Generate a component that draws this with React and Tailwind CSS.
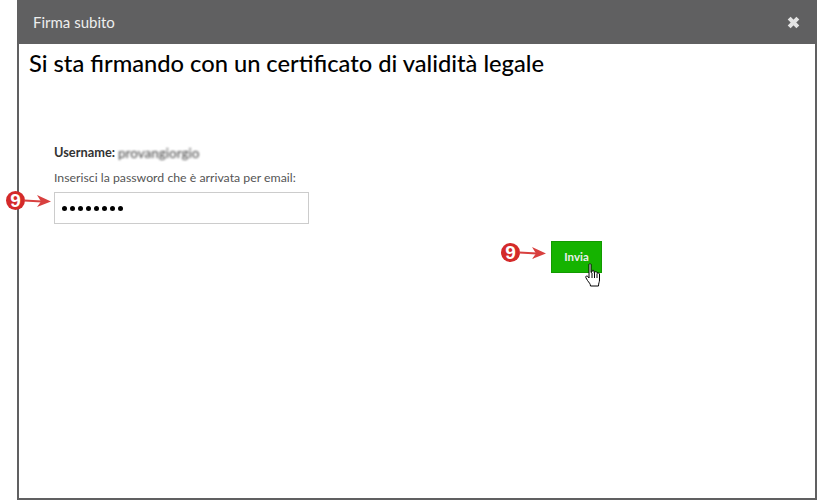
import React from "react";

const Marker = ({ className }) => (
  <div className={`absolute flex items-center ${className}`}>
    <span className="w-[19px] h-[19px] rounded-full bg-[#d42a2a] text-white text-[19px] leading-[19px] font-bold text-center shrink-0 font-['Liberation_Sans',sans-serif]">
      9
    </span>
    <svg width="30" height="14" viewBox="0 0 30 14" className="-ml-[1px]">
      <path d="M0 6.5L18 7.5" stroke="#d8403f" strokeWidth="2" fill="none" />
      <path d="M13 1L27 7.5L13 13L17 7.5Z" fill="#d8403f" />
    </svg>
  </div>
);

const HandCursor = ({ className }) => (
  <svg width="17" height="25" viewBox="0 0 17 25" className={className}>
    <path
      d="M4 1.5C4 .6 6 .6 6 1.5V9.5L7 9V8C7 7 9 7 9 8V9.5L10 9.3C10 8.3 12 8.3 12 9.5V10.5C12.5 9.7 14.5 10 14.5 11V17C14.5 19 13.5 20 13.5 23H5.5C5.5 21 4 19.5 2.5 17.5L.8 14.5C.3 13.3 1.8 12.4 2.8 13.4L4 15Z"
      fill="#fff"
      stroke="#000"
      strokeWidth="1"
      strokeLinejoin="round"
    />
    <path d="M7 10V15M9.5 10V15M12 11V15" stroke="#000" strokeWidth="1" />
  </svg>
);

export default function App() {
  return (
    <div className="w-[823px] h-[500px] bg-white pl-[17px] overflow-hidden font-['Lato',sans-serif]">
      <div className="relative w-[800px] h-[500px] flex flex-col border-2 border-[#606061] border-t-0 bg-white">
        {/* Header */}
        <div className="-mx-[2px] h-[44px] shrink-0 bg-[#606061] flex items-center justify-between pl-[16px] pr-[17px]">
          <span className="text-[15px] text-[#eeeeee]">Firma subito</span>
          <svg width="13" height="13" viewBox="0 0 12 12">
            <path d="M2 2L10 10M10 2L2 10" stroke="#e4e4e4" strokeWidth="3.8" strokeLinecap="butt" />
          </svg>
        </div>

        {/* Body */}
        <div className="flex-1 flex flex-col pl-[10px]">
          <h1 className="mt-[3px] text-[23.7px] leading-[32px] font-medium text-black">
            Si sta firmando con un certificato di validità legale
          </h1>

          <div className="mt-[65px] pl-[25px] flex flex-col">
            <div className="flex items-center h-[18px] text-[12.8px] font-bold text-[#333333]">
              <span>Username:</span>
              <span className="ml-[3px] font-normal text-[13.5px] text-[#444444] blur-[1.3px]">provangiorgio</span>
            </div>
            <div className="mt-[7px] text-[12.3px] leading-[18px] text-[#555555]">
              Inserisci la password che è arrivata per email:
            </div>
            <div className="mt-[5px] w-[255px] h-[32px] border border-[#cccccc] flex items-center pl-[7px] gap-[3px]">
              {[0, 1, 2, 3, 4, 5, 6, 7].map((i) => (
                <span key={i} className="w-[5px] h-[5px] rounded-full bg-black" />
              ))}
            </div>
          </div>

          <div className="mt-[17px] ml-[522px]">
            <button className="w-[51px] h-[32px] bg-[#15b300] border border-[#129a00] text-[#eeeeee] text-[11.5px] font-bold">
              Invia
            </button>
          </div>
        </div>

        {/* Annotations */}
        <Marker className="left-[-13px] top-[191px]" />
        <Marker className="left-[482px] top-[243px]" />
        <HandCursor className="absolute left-[566px] top-[263px]" />
      </div>
    </div>
  );
}
